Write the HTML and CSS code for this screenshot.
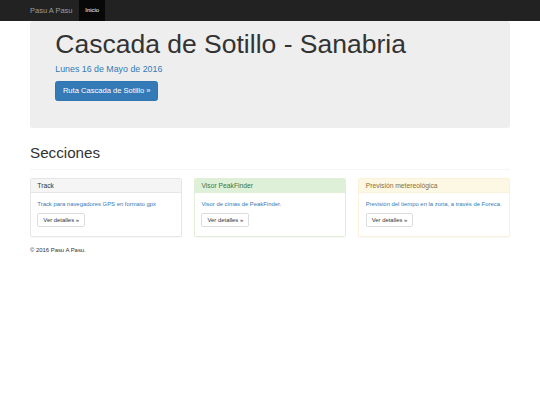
FILE: index.html
```html
<!DOCTYPE html>
<html lang="es">
<head>
    <meta charset="UTF-8">
    <meta name="viewport" content="width=device-width, initial-scale=1.0">
    <title>Pasu A Pasu</title>
    <link rel="stylesheet" href="styles.css">
</head>
<body>
    <nav class="navbar">
        <div class="container navbar-inner">
            <a class="brand" href="#">Pasu A Pasu</a>
            <a class="nav-link active" href="#">Inicio</a>
        </div>
    </nav>

    <div class="container">
        <div class="jumbotron">
            <h1>Cascada de Sotillo - Sanabria</h1>
            <p class="lead">Lunes 16 de Mayo de 2016</p>
            <div class="actions">
                <a class="btn btn-primary" href="#">Ruta Cascada de Sotillo &raquo;</a>
            </div>
        </div>

        <div class="page-header">
            <h2>Secciones</h2>
        </div>

        <div class="panel-grid">
            <div class="panel panel-default">
                <div class="panel-heading">Track</div>
                <div class="panel-body">
                    <p>Track para navegadores GPS en formato gpx</p>
                    <a class="btn btn-default" href="#">Ver detalles &raquo;</a>
                </div>
            </div>
            <div class="panel panel-success">
                <div class="panel-heading">Visor PeakFinder</div>
                <div class="panel-body">
                    <p>Visor de cimas de PeakFinder.</p>
                    <a class="btn btn-default" href="#">Ver detalles &raquo;</a>
                </div>
            </div>
            <div class="panel panel-warning">
                <div class="panel-heading">Previsión metereológica</div>
                <div class="panel-body">
                    <p>Previsión del tiempo en la zona, a través de Foreca.</p>
                    <a class="btn btn-default" href="#">Ver detalles &raquo;</a>
                </div>
            </div>
        </div>

        <footer class="footer">
            <p>&copy; 2016 Pasu A Pasu.</p>
        </footer>
    </div>
</body>
</html>
```

FILE: styles.css
```css
body {
    margin: 0;
    font-family: 'Liberation Sans', Arial, sans-serif;
    font-size: 5.9px;
    line-height: 8.4px;
    color: #333;
    background-color: #fff;
}

a {
    text-decoration: none;
}

.container {
    width: 480px;
    margin: 0 auto;
}

/* navbar */
.navbar {
    background-color: #222;
    height: 21px;
}

.navbar-inner {
    display: flex;
    height: 100%;
}

.brand {
    color: #9d9d9d;
    font-size: 7.5px;
    line-height: 21px;
    padding-right: 6.5px;
}

.nav-link {
    color: #9d9d9d;
    line-height: 21px;
    padding: 0 6.3px;
}

.nav-link.active {
    background-color: #080808;
    color: #fff;
}

/* jumbotron */
.jumbotron {
    background-color: #eee;
    border-radius: 2.5px;
    padding: 8.6px 25.3px 20.2px;
}

.jumbotron h1 {
    margin: 0 0 4.2px;
    font-size: 26.5px;
    font-weight: normal;
    line-height: 1.1;
    color: #333;
}

.lead {
    margin: 0 0 5.8px;
    font-size: 8.84px;
    line-height: 12.6px;
    color: #337ab7;
}

.actions {
    display: flex;
    margin-bottom: 6.3px;
}

/* buttons */
.btn {
    display: inline-block;
    border: 1px solid transparent;
    white-space: nowrap;
}

.btn-primary {
    padding: 4px 6.6px;
    font-size: 7.58px;
    line-height: 10.1px;
    border-color: #3175b0;
    border-radius: 2.5px;
    background-color: #337ab7;
    color: #fff;
}

.btn-default {
    padding: 2px 5px;
    font-size: 5.9px;
    line-height: 8.4px;
    border-color: #dcdcdc;
    border-radius: 1.7px;
    background-color: #fff;
    color: #333;
}

/* sections */
.page-header {
    margin: 16.8px 0 7.4px;
    padding-bottom: 3.8px;
    border-bottom: 1px solid #f6f6f6;
}

.page-header h2 {
    margin: 0 0 4.2px;
    font-size: 15.2px;
    font-weight: normal;
    line-height: 1.1;
    color: #333;
}

.panel-grid {
    display: grid;
    grid-template-columns: repeat(3, 1fr);
    gap: 12.6px;
}

.panel {
    margin-bottom: 8.4px;
    border: 1px solid #e6e6e6;
    border-radius: 1.7px;
    background-color: #fff;
    box-shadow: 0 1px 1px rgb(0 0 0 / 0.03);
}

.panel-heading {
    padding: 3.1px 6.3px;
    border-bottom: 1px solid #e6e6e6;
    font-size: 6.74px;
    line-height: 1.1;
}

.panel-default .panel-heading {
    background-color: #f5f5f5;
    color: #333;
}

.panel-success {
    border-color: #e2efd8;
}

.panel-success .panel-heading {
    background-color: #dff0d8;
    border-color: #e2efd8;
    color: #3c763d;
}

.panel-warning {
    border-color: #fbf0da;
}

.panel-warning .panel-heading {
    background-color: #fcf8e3;
    border-color: #fbf0da;
    color: #8a6d3b;
}

.panel-body {
    padding: 6.3px 6.3px 9.4px;
}

.panel-body p {
    margin: 0 0 4.6px;
    color: #337ab7;
}

.footer p {
    margin: 0;
}
```
